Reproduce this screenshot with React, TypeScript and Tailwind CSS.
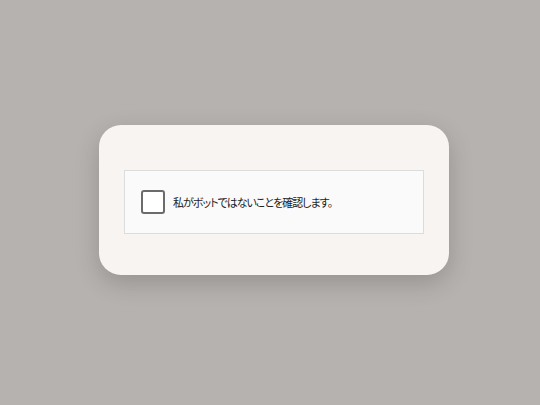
export default function App() {
  return (
    <div className="flex h-[405px] w-[540px] items-center justify-center bg-[#b6b2af] pb-[5px] pl-[8px]">
      <div className="flex w-[350px] flex-col rounded-[22px] bg-[#f7f4f2] px-[25px] pb-[41px] pt-[45px] shadow-[0_8px_24px_rgba(0,0,0,0.18)]">
        <div className="flex h-[64px] items-center gap-[8px] border border-[#dcdcdc] bg-[#fafafa] px-[16px]">
          <div className="h-[24px] w-[24px] shrink-0 rounded-[3px] border-2 border-[#6b6b6b] bg-white" />
          <span className="text-[11px] leading-none tracking-[-1px] text-[#222] [font-family:'Noto_Sans_CJK_JP',sans-serif] [font-feature-settings:'palt']">
            私がボットではないことを確認します。
          </span>
        </div>
      </div>
    </div>
  );
}
